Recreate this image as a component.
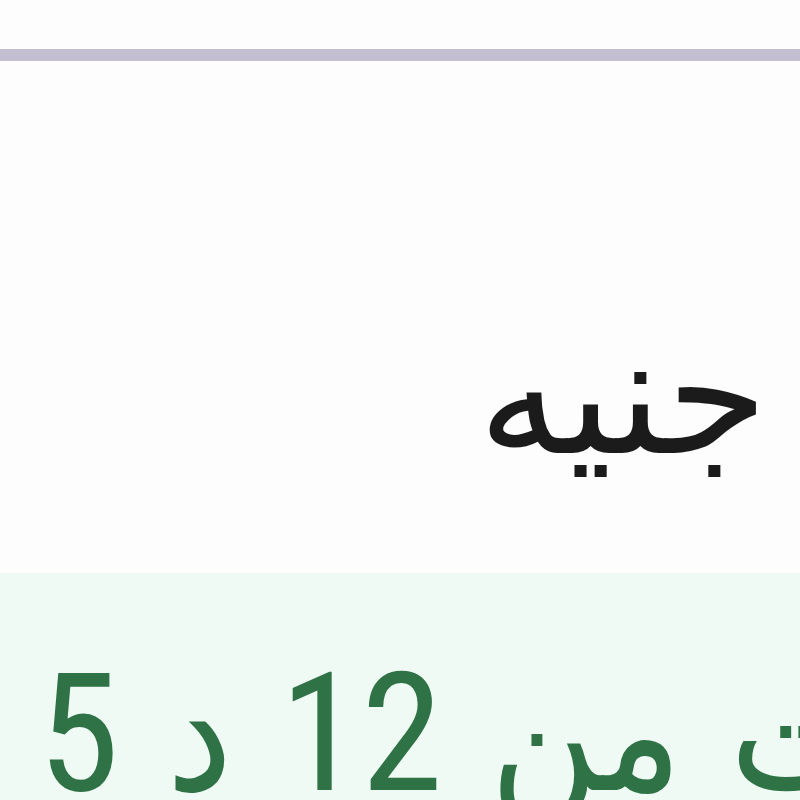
export default function App() {
  return (
    <div className="w-[800px] h-[800px] overflow-hidden bg-[#fefdfe]">
      <div className="h-[49px]" />
      <div className="h-[12px] bg-[#c4bfd0]" />
      <div className="h-[512px] pt-[253px] pr-[32px] text-right" dir="rtl">
        <span className="font-['DejaVu_Sans',sans-serif] text-[165px] leading-none text-[#1b1b1b]">جنيه</span>
      </div>
      <div className="h-[227px] bg-[#eefaf3] pl-[38px] pt-[78px] whitespace-nowrap" dir="ltr">
        <div dir="rtl" className="inline-block font-['DejaVu_Sans_Condensed',sans-serif] text-[165px] leading-none text-[#2e7246]">
          تمت من <span className="font-['Roboto_Condensed',sans-serif]">12</span> د <span className="font-['Roboto_Condensed',sans-serif]">5</span>
        </div>
      </div>
    </div>
  );
}
